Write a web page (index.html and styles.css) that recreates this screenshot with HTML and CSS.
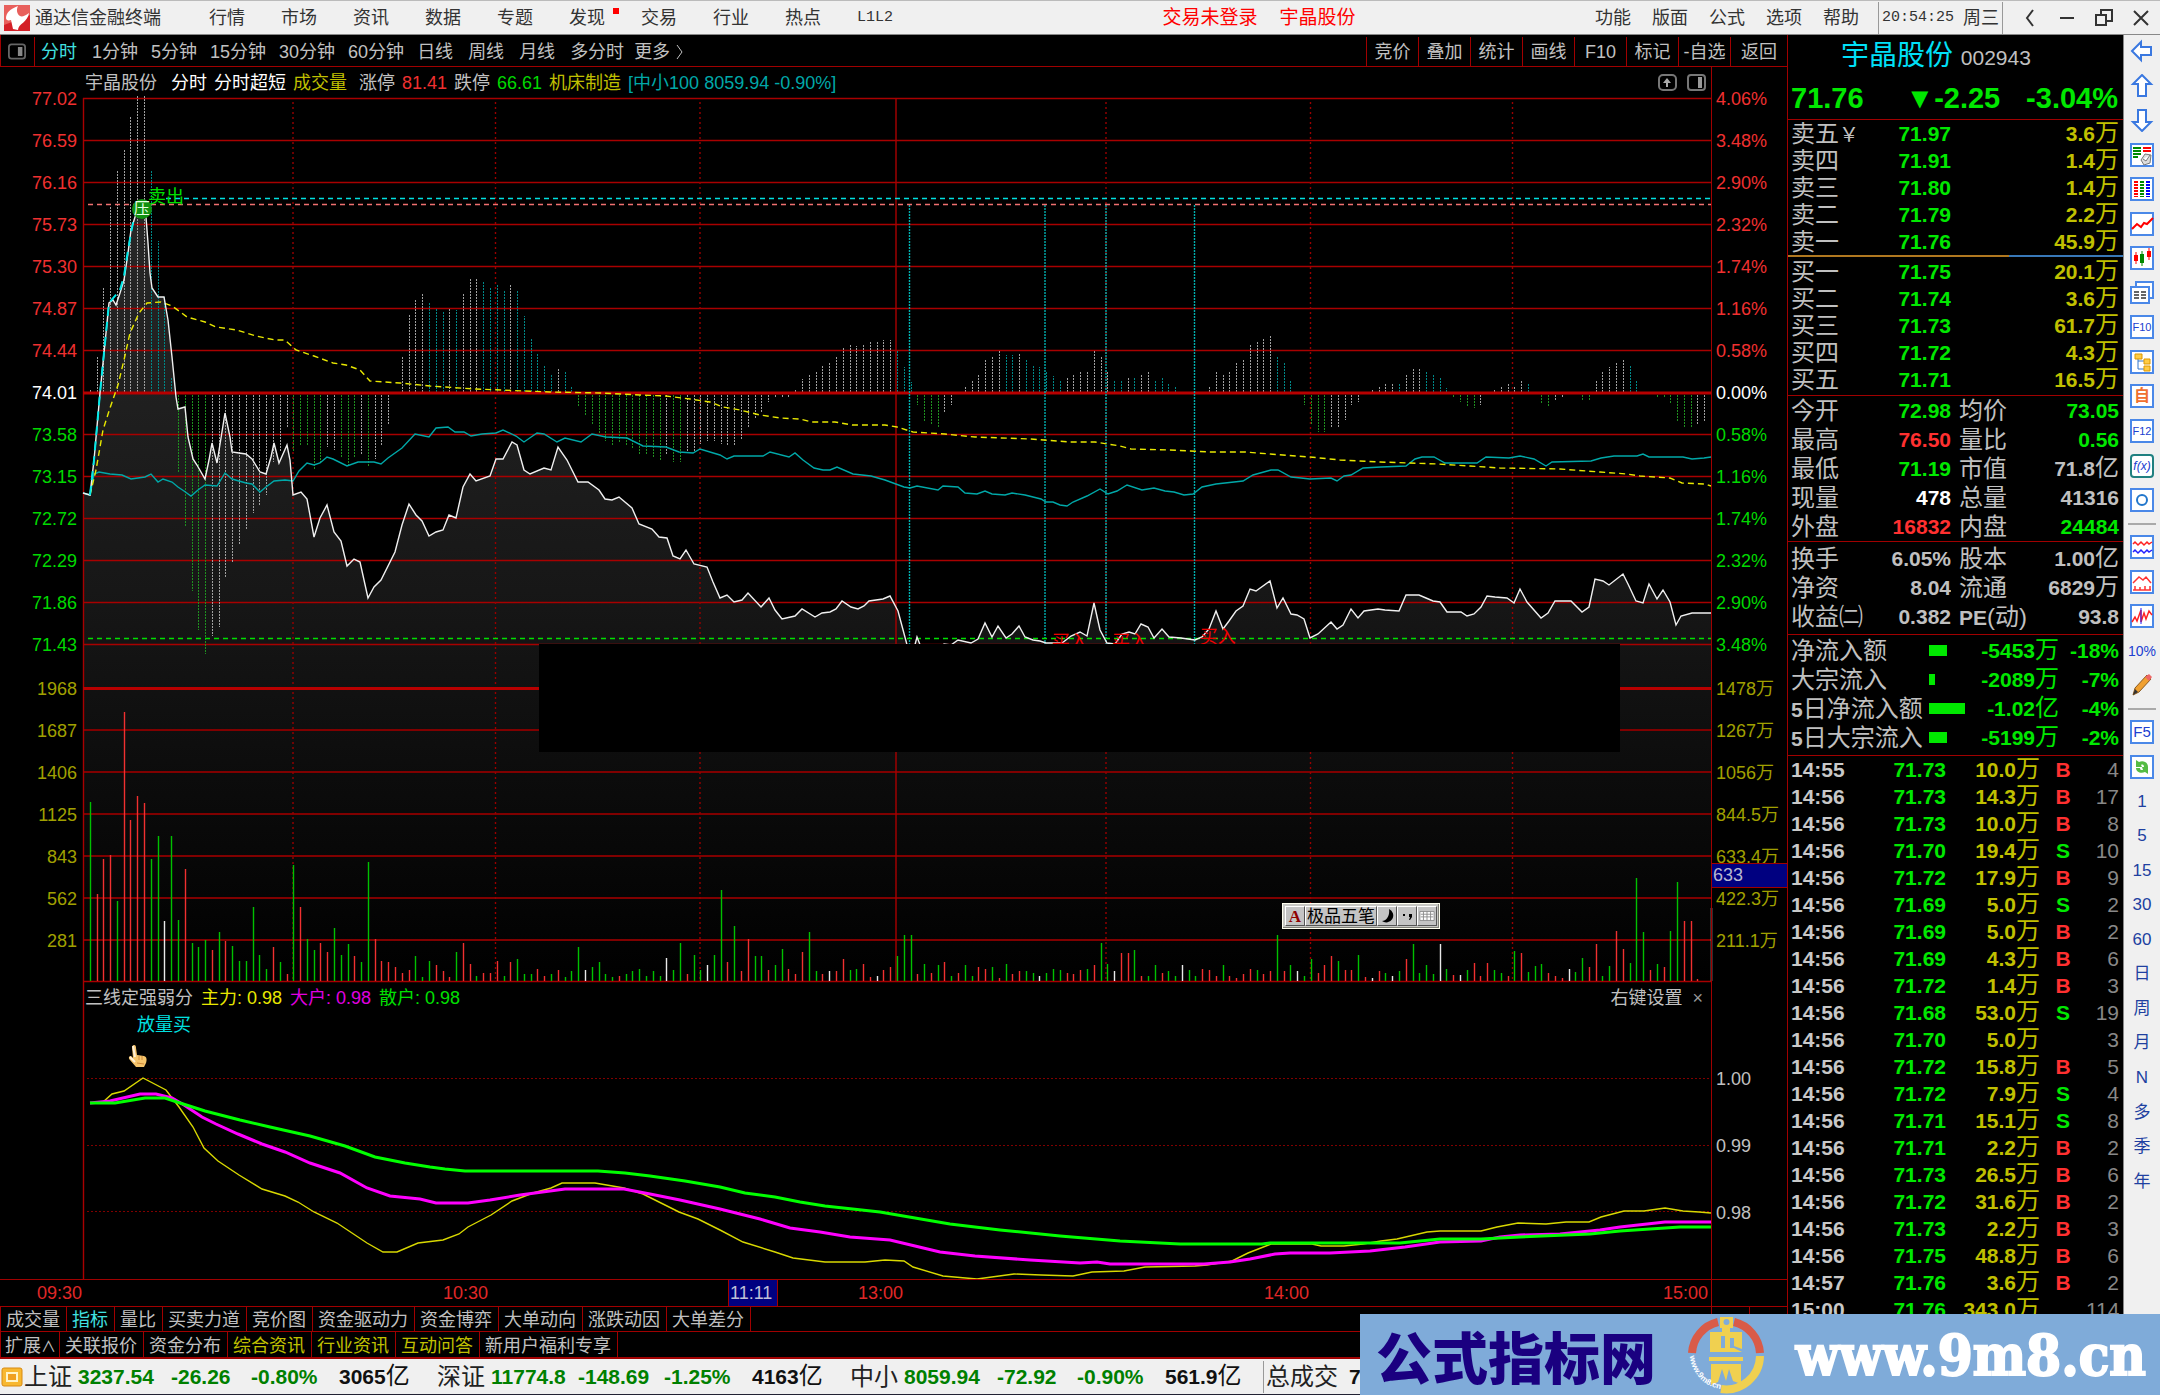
FILE: index.html
```html
<!DOCTYPE html>
<html lang="zh-CN">
<head>
<meta charset="utf-8">
<title>通达信金融终端</title>
<link rel="stylesheet" href="styles.css">
</head>
<body>
<header class="menubar">
  <svg class="logo" viewBox="0 0 26 26"><rect width="26" height="26" fill="#d42027"/><path d="M0 0h26v10L0 20z" fill="#e8605c"/><path d="M14 1C6 4 2 8 2 13c0 2 2 3 5 2l2 9 5 1c0-6 10-8 11-17-4 3-7 4-9 3-3-2-4-6-2-10z" fill="#fff"/></svg>
  <a class="brand" href="#">通达信金融终端</a>
  <nav class="menu">
    <a href="#">行情</a><a href="#">市场</a><a href="#">资讯</a><a href="#">数据</a><a href="#">专题</a><a class="new" href="#">发现</a><a href="#">交易</a><a href="#">行业</a><a href="#">热点</a><a class="mono" href="#">L1L2</a>
  </nav>
  <div class="login"><a href="#">交易未登录</a><a href="#">宇晶股份</a></div>
  <nav class="menu menu-right"><a href="#">功能</a><a href="#">版面</a><a href="#">公式</a><a href="#">选项</a><a href="#">帮助</a></nav>
  <div class="clock"><span class="mono">20:54:25</span><span>周三</span></div>
  <div class="winctl">
    <button aria-label="后退"><svg viewBox="0 0 20 20"><path d="M13 2L7 10l6 8" class="wc"/></svg></button>
    <button aria-label="最小化"><svg viewBox="0 0 20 20"><path d="M3 10h14" class="wc"/></svg></button>
    <button aria-label="还原"><svg viewBox="0 0 20 20"><path d="M7 6V2h11v11h-5M2 7h10v10H2z" class="wc"/></svg></button>
    <button aria-label="关闭"><svg viewBox="0 0 20 20"><path d="M3 3l14 14M17 3L3 17" class="wc"/></svg></button>
  </div>
</header>

<div class="workspace">
<main class="board">
  <div class="periods">
    <button class="panel-toggle" aria-label="侧栏"><svg viewBox="0 0 20 18"><rect x="1" y="1" width="18" height="16" rx="3" fill="none" stroke="#666" stroke-width="2"/><path d="M11 4h5v10h-5z" fill="#888"/></svg></button>
    <button class="on">分时</button>
    <div class="minutes"><button>1分钟</button><button>5分钟</button><button>15分钟</button><button>30分钟</button><button>60分钟</button></div>
    <div class="days"><button>日线</button><button>周线</button><button>月线</button><button>多分时</button></div>
    <button class="more">更多 <svg viewBox="0 0 8 16"><path d="M1 1l5 7-5 7" fill="none" stroke="#c0c0c0"/></svg></button>
    <div class="actions"><button>竞价</button><button>叠加</button><button>统计</button><button>画线</button><button>F10</button><button>标记</button><button>-自选</button><button>返回</button></div>
  </div>

  <section class="trend">
    <div class="axis axis-left">
      <span class="up">77.02</span><span class="up">76.59</span><span class="up">76.16</span><span class="up">75.73</span><span class="up">75.30</span><span class="up">74.87</span><span class="up">74.44</span><span class="flat">74.01</span><span class="down">73.58</span><span class="down">73.15</span><span class="down">72.72</span><span class="down">72.29</span><span class="down">71.86</span><span class="down">71.43</span>
      <span class="vol first">1968</span><span class="vol">1687</span><span class="vol">1406</span><span class="vol">1125</span><span class="vol">843</span><span class="vol">562</span><span class="vol">281</span>
    </div>
    <div class="plot">
      <div class="legend">
        <span class="name">宇晶股份</span><span class="white">分时</span><span class="white">分时超短</span><span class="yellow">成交量</span>
        <span class="limit">涨停</span><span class="up">81.41</span><span>跌停</span><span class="down">66.61</span><span class="yellow">机床制造</span><span class="teal">[中小100 8059.94 -0.90%]</span>
        <span class="legend-icons">
          <svg viewBox="0 0 20 18"><rect x="1" y="1" width="17" height="15" rx="4" class="lg"/><path d="M9 4l4 5h-3v4H8V9H5z" fill="#aaa"/></svg>
          <svg viewBox="0 0 20 18"><rect x="1" y="1" width="17" height="15" rx="3" class="lg"/><path d="M11 3h4v11h-4z" fill="#999"/></svg>
        </span>
      </div>
      <div class="canvas">
        <svg class="chart" viewBox="83 98 1628 884" preserveAspectRatio="none">
          <defs><linearGradient id="shade" gradientUnits="userSpaceOnUse" x1="0" y1="200" x2="0" y2="982"><stop offset="0" stop-color="#282828"/><stop offset="0.5" stop-color="#171717"/><stop offset="1" stop-color="#000"/></linearGradient></defs>
          <path fill="url(#shade)" id="area"/>
          <path class="grid" d="M83 98.5H1711M83 140.5H1711M83 182.5H1711M83 224.5H1711M83 266.5H1711M83 308.5H1711M83 350.5H1711M83 434.5H1711M83 476.5H1711M83 518.5H1711M83 560.5H1711M83 602.5H1711M83 644.5H1711"/>
          <path class="vgrid" d="M83 730H1711M83 772H1711M83 814H1711M83 856H1711M83 898H1711M83 940H1711"/>
          <path class="dots" d="M293 102V982M495.500 102V982M700 102V982M1106 102V982M1310.500 102V982M1512.500 102V982"/>
          <path class="grid" d="M83.500 98V982M896 98V982M83 981.500H1711"/>
          <path class="stick stick-w" id="osc-w"/><path class="stick stick-c" id="osc-c"/><path class="stick stick-g" id="osc-g"/>
          <path class="strong" d="M83 393H1711M83 688.5H1711"/>
          <path class="bar bar-r" id="vol-r"/><path class="bar bar-g" id="vol-g"/><path class="bar bar-w" id="vol-w"/>
          <path class="signal" d="M909.500 205V644M1045 205V644M1106 205V644M1194.500 205V644"/>
          <path class="dash cyan" d="M166 198.500H1711"/><path class="dash pink" d="M88 204.500H1711"/><path class="dash green" d="M88 638.500H1711"/>
          <path class="index" d="M83 493L90 495L94 474L99 472L110 474L122 475L131 479L145 477L151 474L158 482L163 479L172 482L178 487L184 491L191 496L198 490L205 485L217 486L225 473L232 479L246 483L252 484L260 492L266 487L274 481L285 480L293 481L299 471L307 463L314 465L320 463L327 457L333 459L347 466L358 462L374 462L381 464L388 458L402 448L415 434L429 437L436 428L448 427L455 432L464 432L471 436L482 434L496 433L503 430L516 436L524 442L537 433L544 434L557 442L565 438L581 442L592 434L606 437L627 438L643 446L666 447L679 452L693 453L700 449L720 455L727 459L734 456L763 456L770 452L789 457L795 453L803 460L814 468L823 470L830 470L837 467L853 474L871 476L885 480L904 487L910 488L917 486L938 490L943 486L958 487L965 493L977 494L985 491L992 494L1005 495L1012 493L1025 495L1041 499L1046 502L1053 502L1060 505L1067 506L1073 502L1087 496L1100 489L1108 494L1117 491L1127 485L1142 490L1154 488L1165 491L1174 492L1184 495L1193 494L1202 487L1216 484L1243 481L1253 475L1271 470L1278 470L1291 477L1301 478L1310 479L1331 478L1337 481L1344 476L1351 475L1363 468L1381 467L1406 466L1415 459L1422 457L1434 457L1445 463L1477 463L1486 457L1509 458L1520 456L1534 459L1546 466L1552 462L1591 461L1601 458L1614 456L1637 456L1643 454L1649 457L1683 457L1692 459L1704 458L1711 457"/>
          <path class="average" d="M90 495L96 470L103 430L110 408L118 385L124 360L130 333L139 313L147 303L161 302L172 306L179 311L187 317L205 322L216 327L237 330L256 336L275 340L285 340L296 350L314 356L333 363L346 365L360 370L370 381L400 383L430 386L475 389L550 392L600 393L640 395L666 396L690 399L710 402L723 407L740 410L760 415L780 418L800 419L812 422L835 422L852 425L885 425L897 427L913 432L945 434L975 437L1030 439L1070 442L1095 442L1120 446L1131 449L1170 450L1210 452L1245 452L1270 454L1310 457L1340 460L1380 462L1410 463L1438 464L1470 466L1500 468L1560 469L1600 472L1627 474L1640 476L1670 478L1682 483L1705 484L1711 486"/>
          <path class="price" id="price"/>
          <path class="rise" d="M90 495L94 460L100 393L109 303L120 290L124 276L128 250L134 217"/>
        </svg>
        <span class="mark-sell">卖出</span><span class="badge-press">压</span>
        <span class="mark-buy" style="left:59.5%">买入</span><span class="mark-buy" style="left:63.2%">买入</span><span class="mark-buy high" style="left:68.6%">买入</span>
        <div class="mask"></div>
        <div class="ime"><button class="ime-a">A</button><button>极品五笔</button><button aria-label="半角"><svg viewBox="0 0 16 18"><path d="M10 2a7 7 0 1 1-7 12c5 0 8-6 7-12z" fill="#000"/></svg></button><button aria-label="标点"><svg viewBox="0 0 16 18"><path d="M4 7h2v2H4zM10 7h3v3l-2 3h-1l1-3h-1z" fill="#000"/></svg></button><button aria-label="键盘"><svg viewBox="0 0 18 18"><path d="M1 4h16v10H1z" fill="#fff" stroke="#888"/><path d="M2 7h14M2 10h14M5 4v10M9 4v10M13 4v10" stroke="#888"/></svg></button></div>
      </div>
    </div>
    <div class="axis axis-right">
      <span class="up">4.06%</span><span class="up">3.48%</span><span class="up">2.90%</span><span class="up">2.32%</span><span class="up">1.74%</span><span class="up">1.16%</span><span class="up">0.58%</span><span class="flat">0.00%</span><span class="down">0.58%</span><span class="down">1.16%</span><span class="down">1.74%</span><span class="down">2.32%</span><span class="down">2.90%</span><span class="down">3.48%</span>
      <span class="vol first">1478万</span><span class="vol">1267万</span><span class="vol">1056万</span><span class="vol">844.5万</span><span class="vol">633.4万</span><span class="vol">422.3万</span><span class="vol">211.1万</span>
      <output class="cursor-vol">633</output>
    </div>
  </section>

  <section class="strength">
    <div class="strength-gutter"></div>
    <div class="pane">
      <svg class="chart" viewBox="83 982 1628 297" preserveAspectRatio="none">
        <path class="grid" d="M83.500 982V1279"/>
        <path class="hdots" d="M87 1078.500H1711M87 1145.500H1711M87 1211.500H1711"/>
        <path class="main-force" d="M90 1103L103 1102L112 1094L124 1091L143 1078L166 1090L179 1107L193 1127L204 1148L218 1161L239 1175L262 1189L285 1196L298 1202L314 1212L337 1223L367 1243L383 1252L397 1252L418 1243L443 1240L459 1234L468 1227L491 1215L512 1201L533 1193L551 1188L562 1183L595 1183L624 1188L643 1194L661 1203L679 1212L698 1219L720 1230L743 1242L775 1252L793 1258L825 1262L865 1262L885 1260L904 1261L913 1267L943 1276L977 1279L1014 1274L1041 1275L1073 1276L1092 1272L1124 1271L1145 1267L1195 1266L1207 1265L1232 1261L1248 1253L1271 1244L1312 1244L1321 1246L1344 1246L1363 1244L1381 1241L1397 1239L1427 1232L1440 1231L1481 1231L1497 1227L1518 1223L1546 1224L1566 1222L1589 1222L1601 1217L1624 1211L1644 1211L1665 1208L1683 1211L1699 1212L1711 1213"/>
        <path class="big-holder" d="M90 1103L110 1101L140 1094L156 1094L172 1098L184 1105L202 1117L216 1124L238 1134L262 1144L285 1152L310 1163L340 1173L367 1188L390 1196L420 1199L436 1203L468 1203L490 1200L520 1195L565 1189L624 1189L650 1194L680 1200L720 1209L760 1219L790 1228L820 1232L850 1237L890 1240L915 1246L940 1252L975 1256L1030 1260L1080 1263L1097 1262L1110 1264L1204 1264L1230 1262L1250 1259L1275 1254L1290 1253L1330 1253L1370 1251L1405 1247L1440 1242L1481 1241L1500 1237L1520 1235L1560 1234L1600 1230L1620 1227L1665 1222L1711 1222"/>
        <path class="retail" d="M90 1103L115 1103L145 1098L165 1098L180 1103L205 1111L240 1120L270 1127L310 1136L345 1146L375 1157L405 1163L430 1167L445 1169L465 1171L598 1171L625 1173L650 1176L685 1181L720 1187L745 1193L775 1197L800 1202L825 1206L880 1212L915 1218L950 1224L1000 1230L1060 1236L1120 1241L1180 1244L1262 1244L1270 1243L1400 1243L1440 1239L1481 1239L1520 1237L1590 1234L1620 1231L1680 1227L1711 1227"/>
      </svg>
      <div class="pane-body">
        <div class="pane-legend"><span>三线定强弱分</span><span class="bright-yellow">主力: 0.98</span><span class="magenta">大户: 0.98</span><span class="lime">散户: 0.98</span><span class="pane-ctl">右键设置</span><button aria-label="关闭指标">×</button></div>
        <div class="hint">放量买</div>
        <svg class="hand" viewBox="0 0 20 24"><path d="M6 1c2 0 2 2 2 3l1 7 7 1c3 1 3 4 2 7l-2 4H8L2 16c-2-2-1-4 1-4l2 2L4 3c0-1 1-2 2-2z" fill="#f6c56c"/><path d="M5 2l2 11M2 13l5 5" stroke="#fff0d8" stroke-width="2"/><path d="M11 12v4M14 12v4M9 19l7 1" stroke="#d08a3c"/></svg>
      </div>
    </div>
    <div class="strength-axis"><span>1.00</span><span>0.99</span><span>0.98</span></div>
  </section>

  <div class="times"><span>09:30</span><span>10:30</span><span><output>11:11</output></span><span>13:00</span><span>14:00</span><span>15:00</span><span></span></div>
  <nav class="tabs"><button>成交量</button><button class="on">指标</button><button>量比</button><button>买卖力道</button><button>竞价图</button><button>资金驱动力</button><button>资金博弈</button><button>大单动向</button><button>涨跌动因</button><button>大单差分</button><div class="corner"></div></nav>
  <nav class="tabs tabs-low"><button class="expand">扩展<small>∧</small></button><button>关联报价</button><button>资金分布</button><button class="hot">综合资讯</button><button class="hot">行业资讯</button><button class="hot">互动问答</button><button>新用户福利专享</button></nav>
</main>

<aside class="quote">
  <h1>宇晶股份 <small>002943</small></h1>
  <div class="last"><b>71.76</b><b>▼-2.25</b><b>-3.04%</b></div>
  <table class="depth">
    <tr><th>卖五<em>￥</em></th><td>71.97</td><td>3.6<i>万</i></td></tr>
    <tr><th>卖四</th><td>71.91</td><td>1.4<i>万</i></td></tr>
    <tr><th>卖三</th><td>71.80</td><td>1.4<i>万</i></td></tr>
    <tr><th>卖二</th><td>71.79</td><td>2.2<i>万</i></td></tr>
    <tr><th>卖一</th><td>71.76</td><td>45.9<i>万</i></td></tr>
  </table>
  <div class="ratio"></div>
  <table class="depth">
    <tr><th>买一</th><td>71.75</td><td>20.1<i>万</i></td></tr>
    <tr><th>买二</th><td>71.74</td><td>3.6<i>万</i></td></tr>
    <tr><th>买三</th><td>71.73</td><td>61.7<i>万</i></td></tr>
    <tr><th>买四</th><td>71.72</td><td>4.3<i>万</i></td></tr>
    <tr><th>买五</th><td>71.71</td><td>16.5<i>万</i></td></tr>
  </table>
  <table class="stats">
    <tr><th>今开</th><td class="g">72.98</td><th>均价</th><td class="g">73.05</td></tr>
    <tr><th>最高</th><td class="r">76.50</td><th>量比</th><td class="g">0.56</td></tr>
    <tr><th>最低</th><td class="g">71.19</td><th>市值</th><td>71.8<i>亿</i></td></tr>
    <tr><th>现量</th><td class="w">478</td><th>总量</th><td>41316</td></tr>
    <tr><th>外盘</th><td class="r">16832</td><th>内盘</th><td class="g">24484</td></tr>
  </table>
  <table class="stats basics">
    <tr><th>换手</th><td>6.05%</td><th>股本</th><td>1.00<i>亿</i></td></tr>
    <tr><th>净资</th><td>8.04</td><th>流通</th><td>6829<i>万</i></td></tr>
    <tr><th>收益㈡</th><td>0.382</td><th><b>PE</b>(动)</th><td>93.8</td></tr>
  </table>
  <table class="flow">
    <tr><th>净流入额</th><td><div class="amt" style="width:18px"></div></td><td>-5453<i>万</i></td><td>-18%</td></tr>
    <tr><th>大宗流入</th><td><div class="amt" style="width:6px"></div></td><td>-2089<i>万</i></td><td>-7%</td></tr>
    <tr><th><b>5</b>日净流入额</th><td><div class="amt" style="width:36px"></div></td><td>-1.02<i>亿</i></td><td>-4%</td></tr>
    <tr><th><b>5</b>日大宗流入</th><td><div class="amt" style="width:18px"></div></td><td>-5199<i>万</i></td><td>-2%</td></tr>
  </table>
  <table class="ticks">
    <tr><td>14:55</td><td>71.73</td><td>10.0<i>万</i></td><td class="r">B</td><td>4</td></tr>
    <tr><td>14:56</td><td>71.73</td><td>14.3<i>万</i></td><td class="r">B</td><td>17</td></tr>
    <tr><td>14:56</td><td>71.73</td><td>10.0<i>万</i></td><td class="r">B</td><td>8</td></tr>
    <tr><td>14:56</td><td>71.70</td><td>19.4<i>万</i></td><td class="g">S</td><td>10</td></tr>
    <tr><td>14:56</td><td>71.72</td><td>17.9<i>万</i></td><td class="r">B</td><td>9</td></tr>
    <tr><td>14:56</td><td>71.69</td><td>5.0<i>万</i></td><td class="g">S</td><td>2</td></tr>
    <tr><td>14:56</td><td>71.69</td><td>5.0<i>万</i></td><td class="r">B</td><td>2</td></tr>
    <tr><td>14:56</td><td>71.69</td><td>4.3<i>万</i></td><td class="r">B</td><td>6</td></tr>
    <tr><td>14:56</td><td>71.72</td><td>1.4<i>万</i></td><td class="r">B</td><td>3</td></tr>
    <tr><td>14:56</td><td>71.68</td><td>53.0<i>万</i></td><td class="g">S</td><td>19</td></tr>
    <tr><td>14:56</td><td>71.70</td><td>5.0<i>万</i></td><td></td><td>3</td></tr>
    <tr><td>14:56</td><td>71.72</td><td>15.8<i>万</i></td><td class="r">B</td><td>5</td></tr>
    <tr><td>14:56</td><td>71.72</td><td>7.9<i>万</i></td><td class="g">S</td><td>4</td></tr>
    <tr><td>14:56</td><td>71.71</td><td>15.1<i>万</i></td><td class="g">S</td><td>8</td></tr>
    <tr><td>14:56</td><td>71.71</td><td>2.2<i>万</i></td><td class="r">B</td><td>2</td></tr>
    <tr><td>14:56</td><td>71.73</td><td>26.5<i>万</i></td><td class="r">B</td><td>6</td></tr>
    <tr><td>14:56</td><td>71.72</td><td>31.6<i>万</i></td><td class="r">B</td><td>2</td></tr>
    <tr><td>14:56</td><td>71.73</td><td>2.2<i>万</i></td><td class="r">B</td><td>3</td></tr>
    <tr><td>14:56</td><td>71.75</td><td>48.8<i>万</i></td><td class="r">B</td><td>6</td></tr>
    <tr><td>14:57</td><td>71.76</td><td>3.6<i>万</i></td><td class="r">B</td><td>2</td></tr>
    <tr><td>15:00</td><td>71.76</td><td>343.0<i>万</i></td><td></td><td>114</td></tr>
  </table>
</aside>

<aside class="tools">
  <button aria-label="左"><svg viewBox="0 0 24 24"><path d="M2 12l9-9v5h10v8H11v5z" class="arrow"/></svg></button>
  <button aria-label="上"><svg viewBox="0 0 24 24"><path d="M12 1l9 9h-5v12H8V10H3z" class="arrow"/></svg></button>
  <button aria-label="下"><svg viewBox="0 0 24 24"><path d="M12 23l9-9h-5V2H8v12H3z" class="arrow"/></svg></button>
  <button aria-label="报价"><svg viewBox="0 0 24 24"><path d="M1 1h22v22H1z" class="box"/><path d="M3 5h8M3 8h8M3 11h8M3 14h5" stroke="#008a00" stroke-width="2"/><path d="M13 5h8M13 8h8" stroke="#f00" stroke-width="2"/><path d="M11 17l4-6 6 1-1 8-6 2zM13 16l3 2 4-6" fill="#ddd" stroke="#777"/></svg></button>
  <button aria-label="列表"><svg viewBox="0 0 24 24"><path d="M1 1h22v22H1z" class="box"/><g stroke-width="4" stroke-dasharray="2 1"><path d="M6 4v16" stroke="#f00"/><path d="M12 4v16" stroke="#008a00"/><path d="M18 4v16" stroke="#00f"/></g></svg></button>
  <button aria-label="分时图"><svg viewBox="0 0 24 24"><path d="M1 1h22v22H1z" class="box"/><path d="M2 17l5-5 4 3 3-4 3 1 6-6" fill="none" stroke="#f00" stroke-width="2"/></svg></button>
  <button aria-label="K线"><svg viewBox="0 0 24 24"><path d="M1 1h22v22H1z" class="box"/><path d="M6 6v12M19 2v12" stroke="#f00"/><path d="M4 9h4v6H4zM17 5h4v6h-4z" fill="#f00"/><path d="M12 5v15" stroke="#080"/><path d="M10 8h4v9h-4z" fill="#080"/></svg></button>
  <button aria-label="多窗"><svg viewBox="0 0 24 24"><path d="M6 1h17v16H6z" class="box"/><path d="M1 6h18v16H1z" class="box"/><path d="M4 11h5M4 14h5M4 17h5M11 11h5M11 14h5M11 17h5" stroke="#666" stroke-width="2"/></svg></button>
  <button class="boxed">F10</button>
  <button aria-label="板块"><svg viewBox="0 0 24 24"><path d="M1 1h22v22H1z" class="box"/><path d="M8 9v10h6M8 11h6" fill="none" stroke="#37c"/><path d="M5 4h7v5H5zM14 9h6v5h-6zM14 16h6v5h-6z" fill="#fc4" stroke="#d90"/></svg></button>
  <button class="boxed orange">自</button>
  <button class="boxed">F12</button>
  <button class="boxed fx">f(x)</button>
  <button aria-label="周期"><svg viewBox="0 0 24 24"><path d="M1 1h22v22H1z" class="box"/><circle cx="12" cy="12" r="5" fill="none" stroke="#27c" stroke-width="2"/></svg></button>
  <hr>
  <button aria-label="叠加线"><svg viewBox="0 0 24 24"><path d="M1 1h22v22H1z" class="box"/><path d="M3 9l2-2 3 3 3-3 3 3 3-3 2 2 3-2" fill="none" stroke="#f22" stroke-width="1.500"/><path d="M3 17l2-2 3 3 3-3 3 3 3-3 2 2 3-2" fill="none" stroke="#22f" stroke-width="1.500"/></svg></button>
  <button aria-label="区间"><svg viewBox="0 0 24 24"><path d="M1 1h22v22H1z" class="box"/><path d="M3 13l6-6 4 3 3-3 5 6M3 20h18M5 20v-4M10 20v-3M15 20v-4M20 20v-4" fill="none" stroke="#f33" stroke-width="1.500"/></svg></button>
  <button aria-label="波动"><svg viewBox="0 0 24 24"><path d="M1 1h22v22H1z" class="box"/><path d="M2 18l3-5 2 4 4-11v12l3-9 2 6 3-8 3 4" fill="none" stroke="#f22" stroke-width="1.500"/><path d="M11 4v16" stroke="#22f"/></svg></button>
  <button class="pct">10%</button>
  <button aria-label="画笔"><svg viewBox="0 0 24 24"><path d="M3 22l2-7L17 2l4 4L9 19z" fill="#f0a030" stroke="#8a5a20"/><path d="M15 4l4 4 3-4-3-3z" fill="#e66"/><path d="M3 22l2-6 3 3z" fill="#333"/></svg></button>
  <hr>
  <button class="boxed wide">F5</button>
  <button aria-label="刷新"><svg viewBox="0 0 24 24"><path d="M1 1h22v22H1z" class="box"/><path d="M6 12V5l3 2c4-2 9 0 9 5h-4c0-2-1-3-3-2l1 2zM18 12v7l-3-2c-4 2-9 0-9-4h4c0 2 1 2 3 2l-1-3z" fill="#5b4"/></svg></button>
  <button>1</button><button>5</button><button>15</button><button>30</button><button>60</button><button>日</button><button>周</button><button>月</button><button>N</button><button>多</button><button>季</button><button>年</button>
</aside>
</div>

<footer class="status">
  <svg class="coin" viewBox="0 0 22 20"><rect x="1" y="1" width="20" height="18" rx="2" fill="#f8b830" stroke="#d88a10"/><rect x="5" y="5" width="12" height="10" fill="#fff4c8"/><rect x="7" y="7" width="8" height="6" fill="#f0a020"/></svg>
  <div class="idx"><span>上证</span><b>3237.54</b><b>-26.26</b><b>-0.80%</b><b class="k">3065<i>亿</i></b></div>
  <div class="idx second"><span>深证</span><b>11774.8</b><b>-148.69</b><b>-1.25%</b><b class="k">4163<i>亿</i></b></div>
  <div class="idx"><span>中小</span><b>8059.94</b><b>-72.92</b><b>-0.90%</b><b class="k">561.9<i>亿</i></b></div>
  <div class="total"><span>总成交</span><b>7</b></div>
</footer>

<div class="sitemark">
  <strong>公式指标网</strong>
  <svg viewBox="0 0 78 78"><g fill="none" stroke-width="8"><path d="M5 37A34 34 0 0 1 31 6" stroke="#d95b48"/><path d="M47 6A34 34 0 0 1 73 37" stroke="#d95b48"/><path d="M73 40A34 34 0 0 1 34 73" stroke="#f0d050"/></g><path d="M33 1h13v11h-3v4h12v17l-8-3v-8h-4v10h-5V20h-4v12h13l8 4H23V16h12v-4h-2zM22 41h34v4H22zM24 48h30v20l-8-3-4-12-3 12-4-12-4 13-7 3z" fill="#f0d050"/><circle cx="39.500" cy="6" r="3" fill="#7fabd9"/><path id="ring" d="M3 40A36 36 0 0 0 34 73" fill="none"/><text font-size="8" font-weight="bold" fill="#fff" font-family="Liberation Sans, sans-serif"><textPath href="#ring">www.9m8.cn</textPath></text></svg>
  <em>www.9m8.cn</em>
</div>
<script src="chart.js"></script>
</body>
</html>
```
FILE: styles.css
```css
* { box-sizing: border-box; }
body {
  margin: 0; min-height: 100vh; display: flex; flex-direction: column;
  background: #000; color: #c0c0c0; overflow-x: hidden; position: relative;
  font: 18px/24px "Liberation Sans", "Noto Sans CJK SC", sans-serif;
}
button { border: 0; padding: 0; background: none; color: inherit; font: inherit; white-space: nowrap; }
a { color: inherit; text-decoration: none; white-space: nowrap; }
i, em { font-style: normal; font-weight: 400; }
svg { display: block; }
.mono { font-family: "Liberation Mono", monospace; font-size: 15px; }

/* menu bar */
.menubar { display: flex; align-items: center; height: 35px; background: #f0f0f0; color: #333; border-top: 1px solid #bbb; border-bottom: 1px solid #888; padding-left: 4px; }
.logo { width: 26px; height: 26px; margin-right: 5px; }
.brand { margin-right: 48px; }
.menu { display: flex; gap: 36px; align-items: center; }
.new { position: relative; }
.new::after { content: ""; position: absolute; right: -14px; top: 2px; width: 6px; height: 6px; background: #f00; }
.login { display: flex; gap: 22px; margin: 0 auto; padding-left: 30px; color: #f00; font-size: 19px; }
.menu-right { gap: 21px; }
.clock { display: flex; gap: 9px; align-items: center; height: 32px; margin-left: 19px; padding: 0 3px; border-left: 1px solid #999; border-right: 1px solid #999; }
.winctl { display: flex; gap: 17px; padding: 0 9px 0 17px; }
.winctl svg { width: 20px; height: 20px; }
.wc { fill: none; stroke: #333; stroke-width: 2; }

.workspace { flex: 1; display: flex; }
.board { flex: 1; min-width: 0; display: flex; flex-direction: column; }

/* period bar */
.periods { display: flex; align-items: center; height: 32px; padding-top: 2px; border-bottom: 1px solid #a00000; border-left: 1px solid #a00000; }
.panel-toggle { width: 34px; align-self: stretch; border-right: 1px solid #a00000; margin-right: 6px; padding-left: 7px; }
.panel-toggle svg { width: 18px; height: 17px; }
.on { color: #40e0e0; }
.minutes { display: flex; gap: 13px; margin: 0 13px 0 15px; }
.days { display: flex; gap: 15px; margin-right: 10px; }
.more { display: flex; align-items: center; gap: 6px; }
.more svg { width: 8px; height: 16px; }
.actions { display: grid; grid-template-columns: repeat(7, 52px) 57px; margin-left: auto; align-self: stretch; }
.actions button { border-left: 1px solid #a00000; }

/* intraday chart */
.trend, .strength { display: grid; grid-template-columns: 83px minmax(0, 1fr) 76px; }
.axis { display: flex; flex-direction: column; padding: 11px 0 20px; }
.axis span { height: 42px; line-height: 42px; }
.axis .first { margin-top: 2px; }
.axis-left { padding-right: 6px; text-align: right; }
.axis-right { padding-left: 4px; border-left: 1px solid #a00000; position: relative; }
.up { color: #f03030; }
.down { color: #00d800; }
.flat { color: #fff; }
.vol { color: #a0a000; }
.cursor-vol { position: absolute; left: 0; right: 0; bottom: 94px; height: 25px; padding-left: 1px; background: #000080; border-top: 1px solid #a00000; border-bottom: 1px solid #a00000; line-height: 22px; color: #b8b8d0; }
.plot { display: flex; flex-direction: column; min-width: 0; }
.legend { display: flex; align-items: center; gap: 7px; height: 31px; padding-left: 2px; white-space: nowrap; }
.name { margin-right: 7px; }
.limit { margin-left: 5px; }
.white { color: #fff; }
.yellow { color: #c0c000; }
.teal { color: #00a8a8; }
.legend-icons { display: flex; gap: 9px; margin-left: auto; margin-right: 4px; }
.legend-icons svg { width: 20px; height: 18px; }
.lg { fill: none; stroke: #777; stroke-width: 2; }
.canvas { flex: 1; position: relative; min-height: 0; }
.canvas .chart { position: absolute; width: 100%; height: 100%; }
.chart { overflow: visible; }
.chart path { fill: none; }
#area { fill: url(#shade); }
.chart .grid { stroke: #a80000; stroke-width: 1.4; }
.vgrid { stroke: #800000; stroke-width: 2; }
.strong { stroke: #b80000; stroke-width: 3; }
.dots { stroke: #980000; stroke-width: 1.4; stroke-dasharray: 2 3; }
.hdots { stroke: #800000; stroke-dasharray: 2 2; }
.stick { stroke-dasharray: 2 1; stroke-width: 1; }
.stick-w { stroke: #a0a0a0; }
.stick-c { stroke: #008888; }
.stick-g { stroke: #209020; }
.bar { stroke-width: 1.4; }
.bar-r { stroke: #f03030; }
.bar-g { stroke: #00c000; }
.bar-w { stroke: #e8e8e8; }
.signal { stroke: #00b0b0; stroke-width: 1.4; stroke-dasharray: 2 1; }
.dash { stroke-dasharray: 5 4; stroke-width: 1.4; }
.cyan { stroke: #00e0e0; }
.pink { stroke: #f07070; }
.green { stroke: #00e000; }
.index { stroke: #00a8a8; stroke-width: 1.4; }
.average { stroke: #e8e800; stroke-width: 1.4; stroke-dasharray: 6 4; }
.price { stroke: #f0f0f0; stroke-width: 1.4; }
.rise { stroke: #00e8e8; stroke-width: 2; stroke-dasharray: 9 6; }
.mark-sell { position: absolute; left: 4%; top: 87px; color: #00e000; }
.badge-press { position: absolute; left: 3%; top: 101px; width: 20px; height: 20px; border-radius: 50%; background: #109010; color: #e8ffe8; font-size: 16px; line-height: 20px; text-align: center; }
.mark-buy { position: absolute; top: 532px; color: #f00000; line-height: 24px; }
.high { top: 527px; }
.mask { position: absolute; left: 28%; right: 91px; top: 546px; height: 108px; background: #000; }
.ime { position: absolute; right: 271px; top: 805px; display: flex; width: 158px; height: 26px; padding: 2px; background: #c8c8c4; border: 1px solid #fffff0; box-shadow: inset -1px -1px 0 #808078; color: #000; font-size: 17px; line-height: 20px; }
.ime button { flex: 1; border: 1px solid; border-color: #fff #555 #555 #fff; background: #c4c4c4; display: grid; place-items: center; }
.ime button:nth-child(2) { flex: 0 0 72px; }
.ime svg { width: 16px; height: 18px; }
.ime .ime-a { color: #900000; font: bold 17px/20px "Liberation Serif", serif; }

/* indicator pane */
.strength { flex: 1; }
.pane { display: grid; min-width: 0; }
.pane > * { grid-area: 1 / 1; }
.pane .chart { width: 100%; height: 0; min-height: 100%; }
.main-force { stroke: #d8d800; stroke-width: 1.4; }
.big-holder { stroke: #f0f; stroke-width: 3; }
.retail { stroke: #0f0; stroke-width: 3; }
.pane-body { position: relative; }
.pane-legend { display: flex; align-items: center; gap: 8px; padding: 4px 8px 0 2px; white-space: nowrap; }
.bright-yellow { color: #e8e800; }
.magenta { color: #e000e0; }
.lime { color: #00e000; }
.pane-ctl { margin-left: auto; }
.pane-legend button { color: #999; margin-left: 2px; }
.hint { padding-left: 54px; margin-top: 3px; color: #00e0e0; }
.hand { width: 20px; height: 24px; margin: 7px 0 0 45px; }
.strength-axis { padding: 85px 0 0 4px; border-left: 1px solid #a00000; display: grid; align-content: start; gap: 43px; }
.times { display: grid; grid-template-columns: 443fr 285fr 130fr 406fr 399fr 48fr 76px; height: 27px; border-top: 1px solid #a00000; color: #e02828; line-height: 26px; }
.times span:first-child { padding-left: 37px; }
.times span:last-child { border-left: 1px solid #a00000; }
.times output { display: block; width: 50px; height: 26px; border: 1px solid #a00000; border-width: 0 1px; background: #000080; color: #c0c0d8; padding-left: 1px; }
.tabs { display: flex; height: 25px; border-top: 1px solid #a00000; border-left: 1px solid #a00000; }
.tabs button { height: 24px; padding: 2px 6px 0 5px; border-right: 1px solid #a00000; line-height: 22px; }
.corner { width: 76px; margin-left: auto; border-left: 1px solid #a00000; background: linear-gradient(90deg, #000 37px, #a00000 37px, #a00000 38px, #000 38px); }
.tabs-low { height: 28px; border-bottom: 2px solid #a00000; }
.tabs small { font-size: 15px; }
.tabs-low button { height: 25px; line-height: 24px; }
.tabs .expand { padding-left: 4px; padding-right: 3px; }
.tabs .hot { color: #c0c000; }

/* quote panel */
.quote { width: 336px; border-left: 1px solid #a00000; }
.quote h1 { margin: 0; height: 42px; padding: 5px 0 0 53px; font: 28px/32px "Liberation Sans", "Noto Sans CJK SC", sans-serif; color: #00e0f8; white-space: nowrap; }
.quote small { font-size: 21px; color: #c0c0c0; }
.last { display: flex; justify-content: space-between; height: 42px; padding: 0 5px 0 3px; font-size: 29px; line-height: 42px; color: #00e800; white-space: nowrap; }
.last b:nth-child(2) { margin-left: 16px; }
.quote table { width: 100%; table-layout: fixed; border-collapse: separate; border-spacing: 0; font-size: 21px; line-height: 24px; }
.quote th, .quote td { padding: 0; height: 27px; overflow: hidden; white-space: nowrap; }
.quote td { text-align: right; font-weight: bold; }
.quote th { font-weight: 400; text-align: left; font-size: 24px; padding-left: 3px; }
.quote th b { font-size: 21px; line-height: 20px; }
.quote i { font-size: 24px; line-height: 20px; }
.quote tr td:last-child { padding-right: 4px; }
.quote tr > * > em { font-size: 20px; line-height: 20px; }
.depth { border-top: 1px solid #a00000; }
.ratio { height: 2px; background: linear-gradient(90deg, #b07820 66%, #3878b8 66%); }
.ratio + .depth { border-top: 0; padding: 1px 0 2px; }
.depth th { width: 72px; }
.depth td:nth-child(2) { width: 91px; color: #00e800; }
.depth td:last-child { color: #c0c000; }
.quote .stats, .quote .flow { border-top: 1px solid #a00000; }
.quote .stats > tbody > tr > *, .quote .flow > tbody > tr > * { height: 29px; }
.stats th:first-child { width: 75px; }
.stats td:nth-child(2) { width: 88px; }
.stats th:nth-child(3) { width: 72px; padding-left: 8px; overflow: visible; }
.basics th:first-child { width: 75px; overflow: visible; }
.basics { padding: 2px 0 3px; }
.flow { padding: 1px 0 3px; }
.flow th { width: 141px; }
.flow td { color: #00e800; }
.flow td:nth-child(2) { width: 38px; }
.flow td:nth-child(3) { width: 92px; }
.amt { height: 11px; background: #00e800; }
.ticks { border-top: 1px solid #a00000; }
.ticks td { color: #00e800; }
.quote .ticks td:first-child { width: 72px; text-align: left; padding-left: 3px; color: #c8c8c8; }
.ticks td:nth-child(2) { width: 86px; }
.ticks td:nth-child(3) { width: 94px; color: #c0c000; }
.quote .ticks td:nth-child(4) { width: 46px; text-align: center; }
.quote .ticks td:last-child { color: #888; font-weight: 400; }
.quote .r { color: #ff3030; }
.quote .g { color: #00e800; }
.quote .w { color: #fff; }

/* right tool strip */
.tools { width: 37px; display: flex; flex-direction: column; justify-content: space-between; align-items: center; padding: 1px 0 162px; background: #f0f0f0; border-left: 1px solid #888; color: #2040a0; font-size: 17px; }
.tools button { height: 30px; display: grid; place-items: center; line-height: 22px; }
.tools svg { width: 24px; height: 24px; }
.tools hr { width: 28px; height: 8px; margin: 0; border: 0; background: linear-gradient(#f0f0f0 3px, #aaa 3px, #aaa 5px, #f0f0f0 5px); }
.arrow { fill: #fff; stroke: #3a78e0; stroke-width: 2; }
.box { fill: #fff; stroke: #4a88e8; stroke-width: 2; }
.tools .boxed { width: 24px; height: 24px; margin: 3px 0; border: 2px solid #4a88e8; background: #fff; color: #2040d0; font-size: 11px; line-height: 20px; }
.tools .wide { font-size: 15px; }
.tools .orange { color: #f07030; font-size: 16px; font-weight: bold; }
.tools .fx { border-color: #208080; border-radius: 4px; font-size: 12px; font-style: italic; }
.tools .pct { color: #2040d0; font-size: 14px; }

/* status bar */
.status { display: flex; align-items: center; height: 36px; background: #f0f0f0; border-bottom: 1px solid #223; color: #222; font-size: 24px; white-space: nowrap; overflow: hidden; }
.coin { width: 22px; height: 20px; margin: 0 1px 0 1px; }
.status b { font-size: 21px; color: #008000; }
.status i { font-size: 24px; }
.idx { display: grid; grid-template-columns: 54px 93px 80px 88px 98px; align-items: center; }
.second { grid-template-columns: 54px 87px 86px 88px 98px; }
.status .k, .total b { color: #111; }
.total { display: flex; gap: 11px; align-items: center; height: 32px; padding-left: 2px; border-left: 1px solid #999; }

.sitemark { position: absolute; right: 0; bottom: 0; width: 800px; height: 81px; padding: 0 14px 0 16px; display: flex; align-items: center; justify-content: space-between; background: #7fabd9; white-space: nowrap; }
.sitemark strong { color: #1a0080; font: 900 56px/78px "Noto Sans CJK SC", sans-serif; }
.sitemark svg { width: 78px; height: 78px; overflow: visible; }
.sitemark em { color: #fff; font: bold 56px/76px "DejaVu Serif Condensed", "DejaVu Serif", serif; -webkit-text-stroke: 2px #fff; }
```
FILE: chart.js
```js
// One entry per trading minute: colour letter followed by a length.
const STEP = 1628 / 240;
const LEFT = 83;

const volume = `g179 r87 r122 r126 g80 r269 r161 r185 r178 g122 g145 w60 g145 g61 r112 g38 g34 g41 r31 g49 r40 g35 g20 g20 g74 g26 g12 r34 g19 r7
g116 r74 g42 g31 r38 r29 g53 g26 g37 r25 g19 g119 r42 r20 r19 r14 r8 r11 g25 g4 g20 r16 r10 r4 g29 r38 r17 g5 r8 r8
r20 g5 r19 g22 g7 g7 r12 r5 g7 r11 g4 g10 g34 w11 g14 g19 g7 g4 r5 g7 g10 g12 g5 g10 g5 w23 g11 g38 r7 g26
g11 w16 g26 g91 r19 g55 r10 r42 g25 g25 r11 g16 g32 r12 r7 r29 g49 g10 r7 w10 r10 r22 g11 g12 r17 r4 w5 r11 r14 g25
g46 g46 r7 g17 r8 g16 r19 g5 r8 g16 g5 r14 r12 g14 r3 g17 r7 r10 g10 g8 w5 g8 g12 g11 r8 r7 r11 g12 r16 g38
g17 w10 r28 r28 g31 r5 g5 g16 r8 g10 g5 w16 g11 g5 r12 r11 r5 g16 r5 r3 r7 r12 g11 r7 r10 g46 r10 g16 w10 g5
g22 r8 r16 r25 g20 r11 r11 g26 r4 w3 r10 g8 w5 g10 r22 g37 g8 g16 g7 w37 g12 r6 w6 g11 r18 r5 r18 g11 g8 r5
g30 r28 g9 g15 g17 r8 r5 r3 w12 g9 g23 r14 r37 g5 g15 r50 r32 g18 g103 g49 r11 g17 r14 g50 g99 r60 r60 r2 w0 w73`;

// Negative lengths hang below the zero line.
const oscillator = `w3 w35 w104 w186 w221 w243 w276 w296 w296 c222 c151 c96 c15 g-80 g-135 g-199 g-238 g-262 w-244 w-235 w-185 w-170 w-153 w-137 w-121 w-113 w-103 w-70 w-60 w-36
g-60 g-53 g-54 g-77 g-70 w-55 w-58 g-65 g-74 g-65 w-63 g-74 w-67 w-54 w-32 w-3 w36 w77 w93 w98 c89 c84 c80 w84 c82 w98 w114 w114 c111 c105
c108 c102 w107 c101 c76 c53 c38 c27 c17 w23 c20 c5 g-14 g-24 g-33 g-42 g-49 g-53 g-50 g-53 g-56 g-63 g-62 g-65 g-69 w-63 g-70 g-70 w-61 w-60
w-52 w-49 w-49 w-52 w-54 w-54 w-48 w-35 w-26 w-20 w-10 w-6 w-6 w-6 w2 w13 w18 w20 w26 w29 w36 w45 w47 w46 w47 w50 w50 w52 w52 c42
c25 c10 g-13 g-29 g-32 g-35 w-21 w-13 w-2 w6 w11 w18 w33 w35 w41 c37 c37 w39 c33 c27 c25 c20 c16 c11 w14 w18 w21 w20 w41 w35
w20 c12 c11 w14 c14 w18 w20 c12 c14 c9 c5 g-1 g-3 g-1 w-3 w6 w21 w18 w21 w29 w33 w47 w50 w54 w56 c36 c29 c12 g-2 g-13
g-33 g-40 g-40 w-35 w-35 w-28 w-13 w-10 w-3 w2 w6 w9 w9 c8 w18 w23 w23 c21 c17 c14 c4 g-5 g-10 g-15 g-16 w-13 w-3 w3 w6 w9
w6 w12 c9 g-1 g-12 g-15 w-9 w-5 w-3 w-3 g-8 g-8 w11 w21 w25 w29 w33 c26 c11 g-3 g-1 g-6 g-6 g-12 g-30 g-35 g-35 w-33 w-30 w-25`;

const price = `83 493 90 495 94 460 100 393 109 303 113 300 116 305 120 293 124 280 128 253 131 230 135 217 142 203 146 217 148 243 150 273 152 288 158 297 164 297 168 320 172 357 176 397 178 409 185 407 188 437 193 459 197 465 205 479 209 460 212 443 217 463 225 413 230 437 232 452 239 453 246 454 252 459 260 472 266 474 271 457 274 443 279 463 287 445 290 460 293 495 301 492 307 499 314 537 320 518 327 505 334 532 341 541 347 566 354 559 360 562 368 598 374 587 381 580 395 552 402 525 409 504 416 515 422 521 429 536 436 532 443 530 449 515 456 518 463 487 470 474 476 481 490 476 496 459 503 459 512 442 517 445 524 470 530 474 544 468 551 470 558 447 567 460 578 482 588 482 599 490 605 499 612 500 619 497 632 508 639 524 652 529 659 537 667 538 673 556 680 559 686 550 694 564 707 567 713 582 720 598 727 595 734 602 742 600 748 593 761 607 769 598 775 610 782 619 795 616 802 609 815 617 822 613 830 612 836 609 842 601 851 607 858 609 864 606 869 601 883 599 890 596 898 611 906 641 911 660 917 637 924 655 938 658 944 644 951 645 958 640 971 643 978 639 985 623 992 637 998 626 1006 638 1012 634 1019 626 1025 637 1033 640 1040 641 1046 643 1062 643 1071 636 1080 632 1087 636 1094 603 1100 630 1107 643 1115 644 1122 634 1129 632 1135 634 1141 624 1148 627 1154 638 1162 629 1169 637 1181 638 1195 640 1202 637 1209 629 1216 611 1223 629 1229 621 1236 611 1243 606 1250 589 1256 591 1270 581 1277 608 1283 598 1291 614 1297 615 1304 619 1310 638 1318 634 1331 622 1337 629 1343 625 1351 609 1358 618 1364 611 1378 609 1385 610 1399 611 1406 595 1419 595 1426 598 1433 601 1440 602 1447 612 1461 612 1467 616 1474 614 1481 607 1487 596 1495 597 1507 598 1514 603 1520 589 1527 602 1541 618 1548 613 1555 601 1571 601 1582 612 1589 607 1595 579 1603 581 1609 585 1623 574 1628 584 1636 601 1643 603 1649 584 1657 599 1663 590 1670 602 1676 625 1681 616 1692 613 1711 613`;

function sticks(source, base, prefix) {
  const paths = {};
  source.trim().split(/\s+/).forEach((item, n) => {
    const x = Math.round(LEFT + (n + 1) * STEP) + 0.5;
    const colour = item[0];
    const length = Number(item.slice(1));
    paths[colour] = (paths[colour] || "") + `M${x} ${base}V${base - length}`;
  });
  for (const colour in paths) {
    document.getElementById(prefix + colour).setAttribute("d", paths[colour]);
  }
}

sticks(volume, 981, "vol-");
sticks(oscillator, 392, "osc-");
document.getElementById("price").setAttribute("d", "M" + price);
document.getElementById("area").setAttribute("d", "M" + price + " V982H83Z");
```
